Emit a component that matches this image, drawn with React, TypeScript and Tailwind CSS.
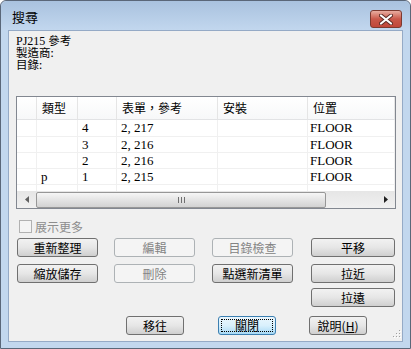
import React from "react";

const FONT = { fontFamily: '"Liberation Serif", "Noto Sans CJK TC", serif' };
const CJK = { fontFamily: '"Noto Sans CJK TC", "Liberation Sans", sans-serif' };

function Btn({
  label,
  w = "w-[81px]",
  disabled,
  focused,
  className = "",
}: {
  label: React.ReactNode;
  w?: string;
  disabled?: boolean;
  focused?: boolean;
  className?: string;
}) {
  if (disabled) {
    return (
      <div
        className={`${w} ${className} flex h-[19px] items-center justify-center rounded-[3px] border border-[#adb2b5] bg-[#f4f4f4] text-[12px] text-[#838383]`}
        style={CJK}
      >
        {label}
      </div>
    );
  }
  if (focused) {
    return (
      <div
        className={`${w} ${className} flex h-[19px] items-center justify-center rounded-[3px] border border-[#3c7fb1] bg-gradient-to-b from-[#eaf6fd] via-[#d9f0fc] to-[#a7d9f5] p-[2px] text-[12px] text-black`}
        style={CJK}
      >
        <div className="flex h-full w-full items-center justify-center border border-dotted border-black">
          {label}
        </div>
      </div>
    );
  }
  return (
    <div
      className={`${w} ${className} flex h-[19px] items-center justify-center rounded-[3px] border border-[#707070] bg-gradient-to-b from-[#f2f2f2] via-[#e6e6e6] to-[#cfcfcf] text-[12px] text-black`}
      style={CJK}
    >
      {label}
    </div>
  );
}

const cols = ["w-[20px]", "w-[41px]", "w-[39px]", "w-[101px]", "w-[90px]", "w-[87px]"];

const rows = [
  ["", "", "4", "2, 217", "", "FLOOR"],
  ["", "", "3", "2, 216", "", "FLOOR"],
  ["", "", "2", "2, 216", "", "FLOOR"],
  ["", "p", "1", "2, 215", "", "FLOOR"],
];

export default function App() {
  return (
    <div className="h-[349px] w-[411px] bg-white">
      <div className="flex h-full w-full flex-col rounded-t-[6px] border border-[#5a6779] bg-[#c2d7ee]">
        {/* title bar */}
        <div className="flex h-[29px] items-start justify-between rounded-t-[6px] bg-gradient-to-b from-[#a9c2df] to-[#c2d7ee] pl-[11px] pr-[8px]">
          <span className="mt-[9px] text-[13px] leading-[14px] text-black" style={CJK}>
            搜尋
          </span>
          <div className="mt-[9px] flex h-[18px] w-[32px] items-center justify-center rounded-[3px] border border-[#7d3a30] bg-gradient-to-b from-[#e8ada1] via-[#c9584a] to-[#c0473a]">
            <svg width="14" height="11" viewBox="0 0 14 11">
              <path d="M2 1.5 L12 9.5 M12 1.5 L2 9.5" stroke="#5b2a24" strokeWidth="4" strokeLinecap="round" />
              <path d="M2 1.5 L12 9.5 M12 1.5 L2 9.5" stroke="#ffffff" strokeWidth="2.2" strokeLinecap="round" />
            </svg>
          </div>
        </div>

        {/* client */}
        <div className="relative mx-[7px] mb-[6px] flex flex-1 flex-col border border-[#95aac6] bg-[#f0f0f0]" style={FONT}>
          <div className="pl-[7px] pt-[3px] text-black">
            <div className="h-[12px] text-[12px] leading-[12px]">
              PJ215 <span className="text-[11.5px]" style={CJK}>參考</span>
            </div>
            <div className="h-[12px] text-[11.5px] leading-[12px]" style={CJK}>製造商:</div>
            <div className="h-[12px] text-[11.5px] leading-[12px]" style={CJK}>目錄:</div>
          </div>

          {/* list */}
          <div className="ml-[7px] mt-[26px] flex h-[113px] w-[380px] flex-col border border-[#828790] bg-white">
            <div className="flex h-[23px] border-b border-[#e2e3e5] bg-gradient-to-b from-white to-[#f7f8f9]">
              {["", "類型", "", "表單，參考", "安裝", "位置"].map((h, i) => (
                <div
                  key={i}
                  className={`${cols[i]} flex shrink-0 items-center border-r border-[#e5e5e5] pl-[5px] text-[12px] text-black`}
                  style={CJK}
                >
                  {h}
                </div>
              ))}
            </div>
            {rows.map((r, ri) => (
              <div key={ri} className={`flex ${ri === 0 ? "h-[17px]" : "h-[16px]"} border-b border-[#f0f0f0]`}>
                {r.map((c, ci) => (
                  <div
                    key={ci}
                    className={`${cols[ci]} flex shrink-0 items-center border-r border-[#f0f0f0] ${ci === 5 ? "pl-[2px]" : "pl-[4px]"} text-[13px] text-black`}
                  >
                    {c}
                  </div>
                ))}
              </div>
            ))}
            <div className="flex flex-1">
              {cols.map((c, i) => (
                <div key={i} className={`${c} shrink-0 border-r border-[#f0f0f0]`} />
              ))}
            </div>
            {/* scrollbar */}
            <div className="flex h-[17px] items-center bg-gradient-to-b from-[#e6e6e6] to-[#f0f0f0]">
              <div className="flex w-[19px] items-center justify-center">
                <svg width="4" height="7" viewBox="0 0 4 7">
                  <path d="M4 0 L0 3.5 L4 7 Z" fill="#606060" />
                </svg>
              </div>
              <div className="flex h-[16px] w-[290px] items-center justify-center rounded-[2px] border border-[#979797] bg-gradient-to-b from-[#f6f6f6] via-[#e4e4e4] to-[#d2d2d2]">
                <svg width="7" height="6" viewBox="0 0 7 6">
                  <path d="M0.5 0 V6 M3.5 0 V6 M6.5 0 V6" stroke="#6f6f6f" strokeWidth="1" />
                </svg>
              </div>
              <div className="flex flex-1 items-center justify-end pr-[7px]">
                <svg width="4" height="7" viewBox="0 0 4 7">
                  <path d="M0 0 L4 3.5 L0 7 Z" fill="#202020" />
                </svg>
              </div>
            </div>
          </div>

          {/* checkbox */}
          <div className="ml-[10px] mt-[11px] flex h-[13px] items-center gap-[3px]">
            <div className="h-[13px] w-[13px] border border-[#b1b1b1] bg-[#f4f4f4]" />
            <span className="text-[12px] leading-[13px] text-[#8d8d8d]" style={CJK}>
              展示更多
            </span>
          </div>

          {/* button rows */}
          <div className="ml-[8px] mt-[5px] flex">
            <Btn label="重新整理" />
            <Btn label="編輯" disabled className="ml-[16px]" />
            <Btn label="目錄檢查" disabled className="ml-[17px]" />
            <Btn label="平移" w="w-[84px]" className="ml-[18px]" />
          </div>
          <div className="ml-[8px] mt-[7px] flex">
            <Btn label="縮放儲存" />
            <Btn label="刪除" disabled className="ml-[16px]" />
            <Btn label="點選新清單" className="ml-[17px]" />
            <Btn label="拉近" w="w-[84px]" className="ml-[18px]" />
          </div>
          <div className="ml-[302px] mt-[5px] flex">
            <Btn label="拉遠" w="w-[84px]" />
          </div>
          <div className="ml-[117px] mt-[9px] flex">
            <Btn label="移往" w="w-[58px]" />
            <Btn label="關閉" w="w-[58px]" focused className="ml-[34px]" />
            <Btn
              label={
                <span>
                  說明(<span className="underline">H</span>)
                </span>
              }
              w="w-[58px]"
              className="ml-[33px]"
            />
          </div>

          {/* resize grip */}
          <svg className="absolute bottom-[1px] right-[1px]" width="11" height="11" viewBox="0 0 11 11">
            {[
              [9, 1],
              [9, 4],
              [6, 4],
              [9, 7],
              [6, 7],
              [3, 7],
            ].map(([x, y], i) => (
              <g key={i}>
                <rect x={x + 1} y={y + 1} width="1" height="1" fill="#ffffff" />
                <rect x={x} y={y} width="1" height="1" fill="#a0a0a0" />
              </g>
            ))}
          </svg>
        </div>
      </div>
    </div>
  );
}
